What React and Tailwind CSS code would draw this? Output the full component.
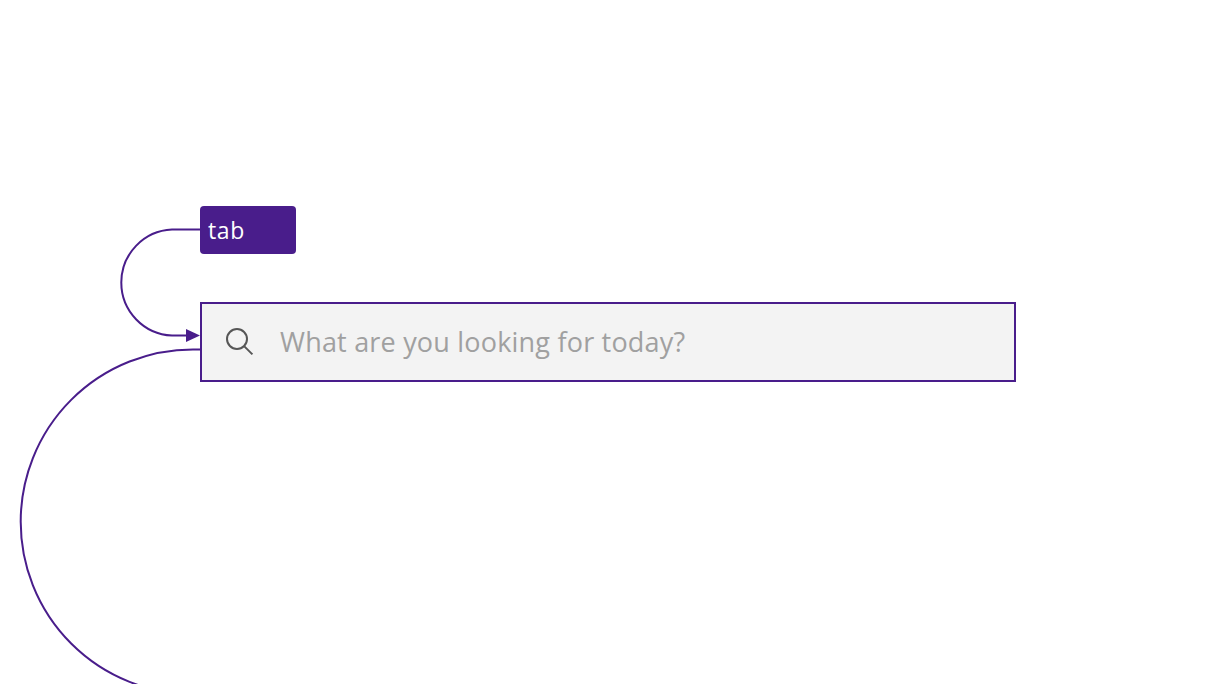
function SearchIcon() {
  return (
    <svg className="size-8 shrink-0" viewBox="0 0 32 32" fill="none" stroke="#565656" strokeWidth="2" aria-hidden="true">
      <circle cx="13" cy="13" r="10" />
      <path d="M20.1 20.1 28.4 28.4" />
    </svg>
  );
}

function FocusPaths() {
  return (
    <svg className="pointer-events-none absolute inset-0 h-full w-full" viewBox="0 0 1216 684" fill="none" stroke="#491d8b" strokeWidth="2" aria-hidden="true">
      <path d="M200 229.6H172A53 53 0 0 0 172 335.5H188" />
      <path d="M186 329V342L200 335.5Z" fill="#491d8b" stroke="none" />
      <path d="M201 349.4H193A172.3 172.3 0 0 0 193 694" />
    </svg>
  );
}

export default function App() {
  return (
    <main className="relative h-[684px] w-[1216px] overflow-hidden bg-white pl-[200px] pt-[206px] font-['Open_Sans',sans-serif]">
      <FocusPaths />
      <div className="flex h-12 w-24 items-center rounded bg-[#491d8b] pl-2 text-white">
        <span className="text-[23px] leading-8 tracking-[0.6px]">tab</span>
      </div>
      <div className="mt-12 flex h-20 w-[816px] items-center border-2 border-[#491d8b] bg-[#f3f3f3] pl-[22px]">
        <SearchIcon />
        <span className="ml-6 whitespace-nowrap text-[27px] leading-9 tracking-[0.2px] text-[#a0a0a0]">
          What are you looking for today?
        </span>
      </div>
    </main>
  );
}
